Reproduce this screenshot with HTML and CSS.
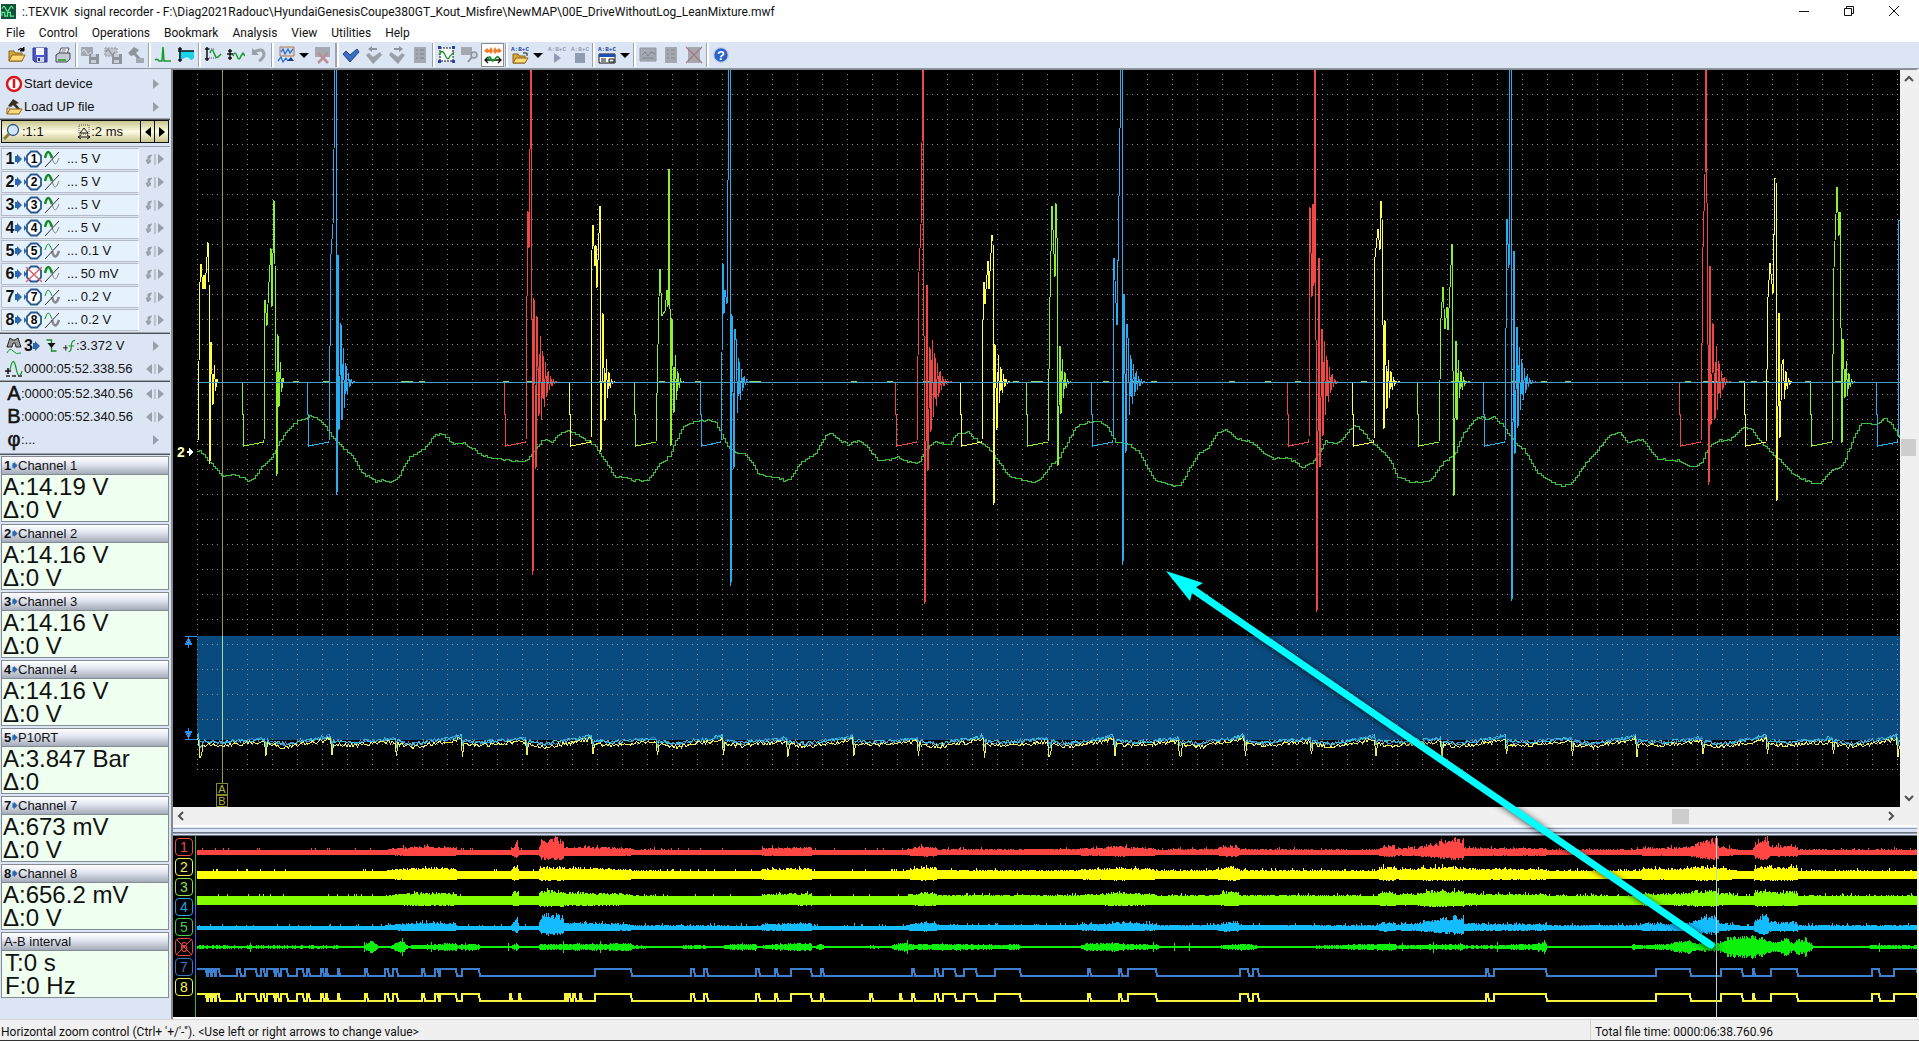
FILE: index.html
```html
<!DOCTYPE html>
<html lang="en">
<head>
    <meta charset="UTF-8">
    <meta name="viewport" content="width=device-width, initial-scale=1.0">
    <title>TEXVIK signal recorder</title>
    <link rel="stylesheet" href="styles.css">
</head>
<body>
    <!-- Icon sprite -->
    <svg class="sprite" aria-hidden="true">
        <symbol id="i-open" viewBox="0 0 18 18">
            <path d="M1 15V5h5l1 2h7v8z" fill="#d9a63c" stroke="#8a6414"/>
            <path d="M1 15l3-6h13l-3 6z" fill="#ffd97a" stroke="#8a6414"/>
            <path d="M10 4q3-3 5-1M16 1v4h-4z" fill="#111" stroke="#111"/>
        </symbol>
        <symbol id="i-save" viewBox="0 0 18 18">
            <path d="M2 2h14v14H4l-2-2z" fill="#4a55c8" stroke="#2a3080"/>
            <path d="M5 2h8v7H5z" fill="#f4f6ff"/>
            <path d="M6 11h7v5H6z" fill="#cfd3ea"/>
            <path d="M7 12h2v3H7z" fill="#2a3080"/>
        </symbol>
        <symbol id="i-print" viewBox="0 0 18 18">
            <path d="M5 8l2-6h8l-2 6z" fill="#fff" stroke="#556"/>
            <path d="M2 9l3-2h11v6l-3 3H2z" fill="#c3c9d4" stroke="#445"/>
            <path d="M4 13h8v2H4z" fill="#3faa3f"/>
            <path d="M8 4h4M7 6h4" stroke="#779"/>
        </symbol>
        <symbol id="i-wavesave" viewBox="0 0 18 18">
            <path d="M0 1h12v9H0z" fill="#a4a9b1"/>
            <path d="M1 6q2-5 4 0t5 0" fill="none" stroke="#dde3ec"/>
            <path d="M8 8h10v10H8z" fill="#8e949d"/>
            <path d="M10 8h5v3h-5zM10 14h5v3h-5z" fill="#c9ced8"/>
        </symbol>
        <symbol id="i-wavesel" viewBox="0 0 18 18">
            <path d="M1 2h12v8H1z" fill="#c0c5ce" stroke="#8e949d" stroke-dasharray="2 1"/>
            <path d="M2 6q2-5 4 0t5 0" fill="none" stroke="#777"/>
            <path d="M8 8h10v10H8z" fill="#8e949d"/>
            <path d="M10 8h5v3h-5zM10 14h5v3h-5z" fill="#c9ced8"/>
        </symbol>
        <symbol id="i-hammer" viewBox="0 0 18 18">
            <path d="M1 7l6-6 5 3-3 3 7 8-2 2-7-8-3 1z" fill="#8e949d"/>
            <path d="M9 12h8v5H9z" fill="#a4a9b1"/>
        </symbol>
        <symbol id="i-peak" viewBox="0 0 18 18">
            <path d="M1 14q2-2 4 1h3L9 1l1 14h7" fill="none" stroke="#149a2c" stroke-width="1.5"/>
        </symbol>
        <symbol id="i-band" viewBox="0 0 18 18">
            <path d="M2 5h15v7q-3 4-5 0-3-2-6 1H2z" fill="#19d3e8"/>
            <path d="M3 1v15M1 3h4M1 14h4M1 5h16" stroke="#111" stroke-width="1.5"/>
        </symbol>
        <symbol id="i-vfit" viewBox="0 0 18 18">
            <path d="M3 1v14M1 3h4M1 13h4" stroke="#111" stroke-width="1.5"/>
            <path d="M5 3h5M5 12h8" stroke="#447" stroke-dasharray="1 1"/>
            <path d="M6 7q2-6 4 0t4 4l3-3" fill="none" stroke="#149a2c" stroke-width="1.5"/>
        </symbol>
        <symbol id="i-vzoom" viewBox="0 0 18 18">
            <path d="M3 3v11M1 5h4M1 12h4M0 8h6" stroke="#111" stroke-width="1.5"/>
            <path d="M6 10q2-6 4 0t4 0l2-3 2 3" fill="none" stroke="#149a2c" stroke-width="1.5"/>
        </symbol>
        <symbol id="i-undo" viewBox="0 0 18 18">
            <path d="M4 6q9-5 10 2 0 4-5 7" fill="none" stroke="#9aa0aa" stroke-width="3"/>
            <path d="M2 2v7h7z" fill="#9aa0aa"/>
        </symbol>
        <symbol id="i-chart" viewBox="0 0 18 18">
            <path d="M3 1h14v9H3z" fill="#cfd9e8" stroke="#b27a4a"/>
            <path d="M4 6l2-3 2 5 3-5 2 4 3-4M1 15l3-4 2 5 3-4 2 3" fill="none" stroke="#2b6fd6" stroke-width="1.3"/>
            <path d="M10 15l4-4 3 4z" fill="#1a3f8f"/>
        </symbol>
        <symbol id="i-chartx" viewBox="0 0 18 18">
            <path d="M1 1h15v10H1z" fill="#a4a9b1"/>
            <path d="M4 7l10 10M14 7L4 17" stroke="#b98f98" stroke-width="2.5"/>
        </symbol>
        <symbol id="i-check" viewBox="0 0 18 18">
            <path d="M1 8l3-3 4 4 7-6 2 3-9 10z" fill="#3a6fc4" stroke="#1f4284"/>
        </symbol>
        <symbol id="i-checkoff" viewBox="0 0 18 18">
            <path d="M1 9l3-2 4 4 7-5 2 3-9 9z" fill="#9aa0aa"/>
            <path d="M3 3l4-3v2h5v2H7v2z" fill="#8e949d"/>
        </symbol>
        <symbol id="i-doc" viewBox="0 0 18 18">
            <path d="M3 1h12v16H3z" fill="#a4a9b1"/>
            <path d="M5 4h2M5 8h2M5 12h2M9 4h4M9 8h4M9 12h4" stroke="#7c828c"/>
        </symbol>
        <symbol id="i-docx" viewBox="0 0 18 18">
            <path d="M3 1h12v16H3z" fill="#a4a9b1"/>
            <path d="M1 1l16 16M17 1L1 17" stroke="#a8757f" stroke-width="1.3"/>
        </symbol>
        <symbol id="i-select" viewBox="0 0 18 18">
            <path d="M2 2h13v13H2z" fill="#fff" stroke="#111" stroke-dasharray="2 1"/>
            <path d="M1 9q3-7 6 0t5 1l4-4" fill="none" stroke="#149a2c" stroke-width="1.3"/>
            <path d="M0 0h3v3H0zM14 0h3v3h-3zM0 14h3v3H0zM14 14h3v3h-3z" fill="#2742a8"/>
        </symbol>
        <symbol id="i-find" viewBox="0 0 18 18">
            <path d="M0 1h11v8H0z" fill="#a4a9b1"/>
            <circle cx="13" cy="9" r="3" fill="#cdd5e2" stroke="#8e949d" stroke-width="1.5"/>
            <path d="M11 11l-4 5" stroke="#8e949d" stroke-width="2"/>
        </symbol>
        <symbol id="i-cursors" viewBox="0 0 18 18">
            <path d="M0 5l3-3 2 2 2-3 2 4 2-4 2 3 2-2 3 3-3 2-2-1-2 2-2-3-2 3-2-2-2 1z" fill="#f08030"/>
            <path d="M1 14h16M4 11l-3 3 3 3M14 11l3 3-3 3" fill="none" stroke="#111" stroke-width="1.3"/>
            <path d="M4 13q2-4 3 0t4 0 3-1" fill="none" stroke="#149a2c" stroke-width="1.8"/>
        </symbol>
        <symbol id="i-abcopen" viewBox="0 0 18 18">
            <text x="0" y="5" class="abc">A:B+C</text>
            <path d="M2 17V8h5l1 2h6v7z" fill="#d9a63c" stroke="#8a6414"/>
            <path d="M2 17l3-5h12l-3 5z" fill="#ffd97a" stroke="#8a6414"/>
            <path d="M12 7h4v3" fill="none" stroke="#111"/>
        </symbol>
        <symbol id="i-abcplay" viewBox="0 0 18 18">
            <text x="0" y="5" class="abc off">A:B+C</text>
            <path d="M6 7l7 5-7 5z" fill="#8f9bb0"/>
        </symbol>
        <symbol id="i-abcstop" viewBox="0 0 18 18">
            <text x="0" y="5" class="abc off">A:B+C</text>
            <path d="M4 7h10v10H4z" fill="#8f9bb0"/>
        </symbol>
        <symbol id="i-abcwin" viewBox="0 0 18 18">
            <text x="0" y="5" class="abc">A:B+C</text>
            <path d="M1 8h16v9H1z" fill="#fff" stroke="#111"/>
            <path d="M1 8h16v3H1z" fill="#1f4fb0"/>
            <path d="M3 13h5M3 15h5M11 13h5v3h-5z" stroke="#111" fill="none"/>
        </symbol>
        <symbol id="i-screen" viewBox="0 0 18 18">
            <path d="M1 2h16v13H1z" fill="#a4a9b1" stroke="#8e949d"/>
            <path d="M3 9l3-3 3 4 3-4 4 2M3 12h12" fill="none" stroke="#7c828c"/>
        </symbol>
        <symbol id="i-help" viewBox="0 0 18 18">
            <circle cx="9" cy="9" r="7.5" fill="#2e62c9" stroke="#c9d6ee" stroke-width="1.5"/>
            <text x="9" y="14" text-anchor="middle" class="help-mark">?</text>
        </symbol>
        <symbol id="i-power" viewBox="0 0 18 18">
            <circle cx="9" cy="9" r="7" fill="#fff" stroke="#d8161c" stroke-width="2.5"/>
            <path d="M9 4v9" stroke="#d8161c" stroke-width="2.5"/>
        </symbol>
        <symbol id="i-load" viewBox="0 0 18 18">
            <path d="M3 8l5-7 6 4-3 1 5 6-2 1-6-6-2 2z" fill="#3a3322"/>
            <path d="M2 16l3-5h12l-3 5z" fill="#ffd97a" stroke="#8a6414"/>
            <path d="M2 16V10h3" fill="none" stroke="#8a6414"/>
        </symbol>
        <symbol id="i-lens" viewBox="0 0 18 18">
            <circle cx="10" cy="7" r="5.5" fill="#cfe6fb" stroke="#33558a" stroke-width="1.3"/>
            <path d="M6 11l-5 5" stroke="#8a7a40" stroke-width="3"/>
        </symbol>
        <symbol id="i-div" viewBox="0 0 14 18">
            <path d="M2 2h10v9H2z" fill="none" stroke="#555" stroke-dasharray="1 1"/>
            <path d="M3 10l4-5 4 5z" fill="none" stroke="#111"/>
            <path d="M1 14h12M4 12l-3 2 3 2M10 12l3 2-3 2" fill="none" stroke="#111"/>
        </symbol>
        <symbol id="i-chip" viewBox="0 0 7 12">
            <path d="M0 3h2V1l5 5-5 5V9H0z" fill="#2f67ab"/>
        </symbol>
        <symbol id="i-oct" viewBox="0 0 18 18">
            <path d="M0 6l3 3-3 3z" fill="#2f67ab"/>
            <path d="M7 1.500h6l4 4v7l-4 4H7l-4-4v-7z" fill="#fff" stroke="#28588f" stroke-width="1.8"/>
        </symbol>
        <symbol id="i-sine" viewBox="0 0 16 18">
            <path d="M1 8q3-12 7 0" fill="none" stroke="#148a24" stroke-width="2.6"/>
            <path d="M8 8q3 12 7 0" fill="none" stroke="#888"/>
            <path d="M1 17L15 2" stroke="#333"/>
        </symbol>
        <symbol id="i-sinelow" viewBox="0 0 16 18">
            <path d="M1 8q3-12 7 0" fill="none" stroke="#149a2c"/>
            <path d="M8 9q3 11 7 0" fill="none" stroke="#888" stroke-width="2.6"/>
            <path d="M1 17L15 2" stroke="#333"/>
        </symbol>
        <symbol id="i-adjust" viewBox="0 0 20 14">
            <path d="M2 10h4M3 10V4l4-1M1 8l2 4 3-4z" fill="#9aa0aa" stroke="#9aa0aa"/>
            <path d="M10 2v11" stroke="#9aa0aa"/>
            <path d="M13 2l6 5-6 5z" fill="#9aa0aa"/>
        </symbol>
        <symbol id="i-next" viewBox="0 0 20 14">
            <path d="M8 2l6 5-6 5z" fill="#9aa0aa"/>
        </symbol>
        <symbol id="i-step" viewBox="0 0 20 14">
            <path d="M7 2L1 7l6 5zM13 2l6 5-6 5z" fill="#9aa0aa"/>
            <path d="M10 2v10" stroke="#9aa0aa"/>
        </symbol>
        <symbol id="i-binoc" viewBox="0 0 16 18">
            <path d="M4 1l-3 9h5l1-4h2l1 4h5l-3-9-3 2H7z" fill="#999" stroke="#222"/>
            <path d="M1 16q3-6 6-2t8 2" fill="none" stroke="#149a2c"/>
        </symbol>
        <symbol id="i-edge" viewBox="0 0 12 16">
            <path d="M1 2h5v11h5" fill="none" stroke="#148a24" stroke-width="1.3"/>
            <path d="M2 5h8l-4 5z" fill="#111"/>
        </symbol>
        <symbol id="i-level" viewBox="0 0 14 16">
            <path d="M0 10h5M3 7v6" stroke="#111"/>
            <path d="M6 14q3 0 3-6t4-6M6 8h6" fill="none" stroke="#149a2c" stroke-width="1.3"/>
        </symbol>
        <symbol id="i-time" viewBox="0 0 18 18">
            <path d="M0 11h6M3 8v6" stroke="#111" stroke-width="1.5"/>
            <path d="M5 10q3-16 6-2t6 3" fill="none" stroke="#149a2c" stroke-width="1.2"/>
            <path d="M1 16h16" stroke="#555" stroke-width="2" stroke-dasharray="4 2"/>
        </symbol>
    </svg>

    <header class="title-bar">
        <svg class="app-icon" viewBox="0 0 16 16">
            <path d="M0 0h16v16H0z" fill="#14503c"/>
            <path d="M1 5q2-5 4 0t4 0 4 0M1 13v-4h3v4h3v-4h3v4h4" fill="none" stroke="#5cf08a" stroke-width="1.3"/>
        </svg>
        <h1>:.TEXVIK&nbsp; signal recorder - F:\Diag2021Radouc\HyundaiGenesisCoupe380GT_Kout_Misfire\NewMAP\00E_DriveWithoutLog_LeanMixture.mwf</h1>
        <div class="window-buttons">
            <button aria-label="Minimize"><svg viewBox="0 0 10 10"><path d="M0 5.5h10"/></svg></button>
            <button aria-label="Restore"><svg viewBox="0 0 10 10"><path d="M.5 2.5h7v7h-7zM2.5 2.5v-2h7v7h-2"/></svg></button>
            <button aria-label="Close"><svg viewBox="0 0 10 10"><path d="M0 0l10 10M10 0L0 10"/></svg></button>
        </div>
    </header>

    <nav class="menu">
        <a href="#">File</a>
        <a href="#">Control</a>
        <a href="#">Operations</a>
        <a href="#">Bookmark</a>
        <a href="#">Analysis</a>
        <a href="#">View</a>
        <a href="#">Utilities</a>
        <a href="#">Help</a>
    </nav>

    <div class="toolbar">
        <button aria-label="Open"><svg><use href="#i-open"/></svg></button>
        <button aria-label="Save"><svg><use href="#i-save"/></svg></button>
        <button aria-label="Print"><svg><use href="#i-print"/></svg></button>
        <span class="sep"></span>
        <button aria-label="Save wave"><svg><use href="#i-wavesave"/></svg></button>
        <button aria-label="Save selection"><svg><use href="#i-wavesel"/></svg></button>
        <button aria-label="Tools"><svg><use href="#i-hammer"/></svg></button>
        <span class="sep"></span>
        <button aria-label="Peak"><svg><use href="#i-peak"/></svg></button>
        <button aria-label="Band"><svg><use href="#i-band"/></svg></button>
        <span class="sep"></span>
        <button aria-label="Fit"><svg><use href="#i-vfit"/></svg></button>
        <button aria-label="Scale"><svg><use href="#i-vzoom"/></svg></button>
        <button aria-label="Undo"><svg><use href="#i-undo"/></svg></button>
        <span class="sep"></span>
        <button aria-label="Chart"><svg><use href="#i-chart"/></svg></button>
        <button class="drop" aria-label="Chart options"></button>
        <button aria-label="Remove chart"><svg><use href="#i-chartx"/></svg></button>
        <span class="sep grip"></span>
        <button aria-label="Bookmark"><svg><use href="#i-check"/></svg></button>
        <button aria-label="Previous bookmark"><svg><use href="#i-checkoff"/></svg></button>
        <button class="flip" aria-label="Next bookmark"><svg><use href="#i-checkoff"/></svg></button>
        <button aria-label="Bookmark list"><svg><use href="#i-doc"/></svg></button>
        <span class="sep"></span>
        <button aria-label="Select"><svg><use href="#i-select"/></svg></button>
        <button aria-label="Find"><svg><use href="#i-find"/></svg></button>
        <button class="pressed" aria-label="Cursors"><svg><use href="#i-cursors"/></svg></button>
        <span class="sep"></span>
        <button aria-label="Open script"><svg><use href="#i-abcopen"/></svg></button>
        <button class="drop" aria-label="Script options"></button>
        <button aria-label="Run script"><svg><use href="#i-abcplay"/></svg></button>
        <button aria-label="Stop script"><svg><use href="#i-abcstop"/></svg></button>
        <span class="sep"></span>
        <button aria-label="Script window"><svg><use href="#i-abcwin"/></svg></button>
        <button class="drop" aria-label="Window options"></button>
        <span class="sep"></span>
        <button aria-label="Screen"><svg><use href="#i-screen"/></svg></button>
        <button aria-label="Report"><svg><use href="#i-doc"/></svg></button>
        <button aria-label="Delete report"><svg><use href="#i-docx"/></svg></button>
        <span class="sep"></span>
        <button aria-label="Help"><svg><use href="#i-help"/></svg></button>
    </div>

    <div class="workspace">
        <aside class="sidebar">
            <div class="group actions">
                <button class="row"><svg class="ic"><use href="#i-power"/></svg>Start device<svg class="side"><use href="#i-next"/></svg></button>
                <button class="row"><svg class="ic"><use href="#i-load"/></svg>Load UP file<svg class="side"><use href="#i-next"/></svg></button>
            </div>

            <div class="zoom-row">
                <button class="zoom-main"><svg class="ic"><use href="#i-lens"/></svg>:1:1<span class="zoom-time"><svg class="ic narrow"><use href="#i-div"/></svg>:2 ms</span></button>
                <button class="arrow" aria-label="Zoom out"><svg viewBox="0 0 8 12"><path d="M7 1v10L1 6z"/></svg></button>
                <button class="arrow" aria-label="Zoom in"><svg viewBox="0 0 8 12"><path d="M1 1v10l6-5z"/></svg></button>
            </div>

            <div class="group channels" id="channels"></div>

            <div class="group">
                <button class="row"><svg class="ic"><use href="#i-binoc"/></svg><b>3</b><svg class="chip"><use href="#i-chip"/></svg><svg class="edge"><use href="#i-edge"/></svg><svg class="edge"><use href="#i-level"/></svg>:3.372 V<svg class="side"><use href="#i-next"/></svg></button>
                <button class="row"><svg class="ic"><use href="#i-time"/></svg>0000:05:52.338.56<svg class="side"><use href="#i-step"/></svg></button>
            </div>

            <div class="group cursors">
                <button class="row"><span class="letter">A</span>:0000:05:52.340.56<svg class="side"><use href="#i-step"/></svg></button>
                <button class="row"><span class="letter">B</span>:0000:05:52.340.56<svg class="side"><use href="#i-step"/></svg></button>
                <button class="row"><span class="letter">φ</span>:...<svg class="side"><use href="#i-next"/></svg></button>
            </div>

            <div class="readouts">
                <section class="readout">
                    <h2><b>1</b><svg><use href="#i-chip"/></svg>Channel 1</h2>
                    <p>A:14.19 V</p>
                    <p>Δ:0 V</p>
                </section>
                <section class="readout">
                    <h2><b>2</b><svg><use href="#i-chip"/></svg>Channel 2</h2>
                    <p>A:14.16 V</p>
                    <p>Δ:0 V</p>
                </section>
                <section class="readout">
                    <h2><b>3</b><svg><use href="#i-chip"/></svg>Channel 3</h2>
                    <p>A:14.16 V</p>
                    <p>Δ:0 V</p>
                </section>
                <section class="readout">
                    <h2><b>4</b><svg><use href="#i-chip"/></svg>Channel 4</h2>
                    <p>A:14.16 V</p>
                    <p>Δ:0 V</p>
                </section>
                <section class="readout">
                    <h2><b>5</b><svg><use href="#i-chip"/></svg>P10RT</h2>
                    <p>A:3.847 Bar</p>
                    <p>Δ:0</p>
                </section>
                <section class="readout">
                    <h2><b>7</b><svg><use href="#i-chip"/></svg>Channel 7</h2>
                    <p>A:673 mV</p>
                    <p>Δ:0 V</p>
                </section>
                <section class="readout">
                    <h2><b>8</b><svg><use href="#i-chip"/></svg>Channel 8</h2>
                    <p>A:656.2 mV</p>
                    <p>Δ:0 V</p>
                </section>
                <section class="readout interval">
                    <h2>A-B interval</h2>
                    <p>T:0 s</p>
                    <p>F:0 Hz</p>
                </section>
            </div>
        </aside>

        <main class="scope">
            <div class="plot-row">
                <svg id="plot" class="plot" viewBox="173 70 1727 737" preserveAspectRatio="none"></svg>
                <div class="vscroll">
                    <svg viewBox="0 0 10 10"><path d="M1 7l4-4 4 4"/></svg>
                    <span class="track"><span class="thumb"></span></span>
                    <svg viewBox="0 0 10 10"><path d="M1 3l4 4 4-4"/></svg>
                </div>
            </div>
            <div class="hscroll">
                <svg viewBox="0 0 10 10"><path d="M7 1L3 5l4 4"/></svg>
                <span class="track"><span class="thumb"></span></span>
                <svg viewBox="0 0 10 10"><path d="M3 1l4 4-4 4"/></svg>
            </div>
            <div class="splitter"></div>
            <div class="overview-row">
                <div class="badges">
                    <span class="c1">1</span>
                    <span class="c2">2</span>
                    <span class="c3">3</span>
                    <span class="c4">4</span>
                    <span class="c5">5</span>
                    <span class="c6">6</span>
                    <span class="c7">7</span>
                    <span class="c8">8</span>
                </div>
                <svg id="overview" class="overview" viewBox="195 836 1722 181" preserveAspectRatio="none"></svg>
            </div>
            <!-- Arrow from the overview to the zoomed part -->
            <svg class="pointer" viewBox="171 69 1748 950" preserveAspectRatio="none">
                <path d="M1188 586L1711 945" stroke="#00ffff" stroke-width="7" stroke-linecap="round"/>
                <path d="M1166 571l37 12-10 6-3 12z" fill="#00ffff"/>
            </svg>
        </main>
    </div>

    <footer class="status">
        <span>Horizontal zoom control (Ctrl+ '+/'-''). &lt;Use left or right arrows to change value&gt;</span>
        <span class="total">Total file time: 0000:06:38.760.96</span>
    </footer>

    <script src="script.js"></script>
</body>
</html>
```
FILE: styles.css
```css
* {
    box-sizing: border-box;
}

body {
    margin: 0;
    height: 100vh;
    display: flex;
    flex-direction: column;
    overflow: hidden;
    background-color: #dce5f3;
    color: #111;
    font-family: "Liberation Sans", Arial, sans-serif;
    font-size: 13px;
}

button {
    border: 0;
    padding: 0;
    background: none;
    color: inherit;
    font: inherit;
}

h1, h2, p {
    margin: 0;
    font-weight: normal;
}

.sprite {
    display: none;
}

/* title bar */
.title-bar {
    display: flex;
    align-items: center;
    height: 23px;
    padding: 0 3px 0 1px;
    background-color: #fff;
    font-family: Roboto, "Open Sans", sans-serif;
}

.title-bar h1 {
    flex: 1;
    padding-left: 6px;
    font-size: 12px;
}

.app-icon {
    width: 15px;
    height: 15px;
}

.window-buttons {
    display: flex;
}

.window-buttons button {
    width: 45px;
    height: 20px;
}

.window-buttons svg {
    width: 10px;
    height: 10px;
    fill: none;
    stroke: #111;
}

/* menu */
.menu {
    display: flex;
    gap: 14px;
    height: 19px;
    padding-left: 6px;
    background-color: #fff;
    font-family: Roboto, "Open Sans", sans-serif;
    font-size: 12px;
    line-height: 20px;
}

.menu a {
    color: #111;
    text-decoration: none;
}

/* toolbar */
.toolbar {
    display: flex;
    align-items: center;
    height: 27px;
    padding-left: 5px;
    background-color: #dce5f3;
    border-bottom: 1px solid #8f959e;
}

.toolbar button {
    display: flex;
    align-items: center;
    justify-content: center;
    width: 23px;
    height: 24px;
}

.toolbar svg {
    width: 18px;
    height: 18px;
    flex: none;
}

.toolbar .flip svg {
    transform: scaleX(-1);
}

.toolbar .pressed {
    background-color: #fff;
    border: 1px solid #8b8b8b;
}

.toolbar .drop {
    width: 14px;
}

.toolbar .drop::after {
    content: "";
    border: 5px solid transparent;
    border-top-color: #000;
    border-bottom: 0;
}

.sep {
    width: 4px;
    height: 24px;
    border-left: 1px solid #dce5f3;
    background-color: #9da3ad;
    border-right: 2px solid #fff;
}

.sep.grip {
    width: 5px;
}

.abc {
    font: bold 6px "Liberation Mono", monospace;
    fill: #1b3fa0;
}

.abc.off {
    fill: #8f9bb0;
}

.help-mark {
    font: bold 13px "Liberation Sans", sans-serif;
    fill: #fff;
}

/* left panel */
.workspace {
    display: flex;
    flex: 1;
    min-height: 0;
}

.sidebar {
    width: 171px;
    flex: none;
    padding-right: 1px;
    background-color: #dce5f3;
}

.group {
    border-bottom: 2px ridge #9aa2ad;
}

.actions {
    padding-top: 3px;
}

.channels {
    padding-bottom: 1px;
}

.row {
    display: flex;
    align-items: center;
    width: 100%;
    height: 23px;
    padding-left: 5px;
    white-space: pre;
}

.row b {
    width: 9px;
    font-size: 16px;
}

.ic {
    width: 18px;
    height: 18px;
    margin-right: 1px;
}

.ic.narrow {
    width: 14px;
    margin: 0;
}

.chip {
    width: 7px;
    height: 12px;
}

.edge {
    width: 13px;
    height: 16px;
    margin-left: 5px;
}

.side {
    width: 20px;
    height: 14px;
    margin-left: auto;
    margin-right: 5px;
}

.letter {
    width: 14px;
    margin-left: 2px;
    font-size: 20px;
    -webkit-text-stroke: 0.5px #111;
}

.cursors {
    padding-bottom: 2px;
}

.zoom-row {
    display: flex;
    height: 27px;
    padding: 0 1px 3px;
    border-bottom: 1px solid #9aa2ad;
}

.zoom-row button {
    display: flex;
    align-items: center;
    border: 1px solid #111;
    background: linear-gradient(#c9c690, #fdfbe2 50%, #c9c690);
}

.zoom-row .zoom-main {
    flex: 1;
    padding: 0 17px 0 1px;
}

.zoom-time {
    display: flex;
    align-items: center;
    margin-left: auto;
}

.zoom-row .arrow {
    width: 15px;
    margin-left: -1px;
    justify-content: center;
}

.arrow svg {
    width: 8px;
    height: 12px;
}

.channel {
    display: flex;
    align-items: center;
    height: 23px;
    padding-left: 1px;
}

.channel button {
    display: flex;
    align-items: center;
    width: 138px;
    height: 22px;
    padding-left: 3px;
    background-color: #e5f1fd;
    border: 1px solid #b5bcc6;
    border-right-color: #fff;
}

.channel b {
    width: 10px;
    font-size: 16px;
}

.channel .socket {
    width: 18px;
    height: 18px;
    margin: 0 2px;
}

.socket text {
    font: bold 12px "Liberation Sans", sans-serif;
}

.channel .sine {
    width: 16px;
    height: 18px;
}

.channel .dots {
    margin: 0 3px 0 7px;
}

/* value boxes */
.readouts {
    display: flex;
    flex-direction: column;
    gap: 2px;
    padding: 1px 1px 0;
}

.readout {
    height: 66px;
    border: 1px solid #858b95;
    background-color: #effff0;
}

.readout h2 {
    display: flex;
    align-items: center;
    height: 18px;
    padding-left: 2px;
    border-bottom: 1px solid #858b95;
    background: linear-gradient(#fff, #e4e8f2 40%, #a4abb8);
    font-size: 13px;
}

.readout h2 svg {
    width: 6px;
    height: 9px;
}

.readout h2 b {
    width: 8px;
}

.readout p {
    padding-left: 1px;
    font-size: 24px;
    line-height: 23px;
    white-space: nowrap;
}

.interval p {
    padding-left: 3px;
}

/* scope */
.scope {
    position: relative;
    display: flex;
    flex-direction: column;
    flex: 1;
    min-width: 0;
    padding-right: 2px;
    border-left: 2px solid #858a90;
    background-color: #f0f0f0;
}

.plot-row {
    display: flex;
    flex: 1;
    min-height: 0;
    border-top: 1px solid #858a90;
}

.plot {
    flex: 1;
    min-width: 0;
    height: 100%;
    background-color: #000;
    shape-rendering: crispEdges;
}

.vscroll {
    display: flex;
    flex-direction: column;
    align-items: center;
    width: 17px;
    padding: 4px 0;
    background-color: #f0f0f0;
}

.hscroll {
    display: flex;
    align-items: center;
    height: 18px;
    padding: 0 21px 0 3px;
    background-color: #f0f0f0;
}

.vscroll > svg,
.hscroll > svg {
    width: 10px;
    height: 10px;
    fill: none;
    stroke: #505050;
    stroke-width: 2;
}

.track {
    display: flex;
    flex: 1;
}

.vscroll .track {
    flex-direction: column;
}

.vscroll .track::before {
    content: "";
    flex: 0 0 50%;
}

.thumb {
    width: 15px;
    height: 17px;
    background-color: #cdcdcd;
}

.hscroll .thumb {
    width: 17px;
    height: 15px;
    margin-left: 87.4%;
}

.splitter {
    height: 11px;
    border-top: 2px solid #fff;
    border-bottom: 4px double #70757c;
    background: linear-gradient(#dce5f3 1px, #8f9db8 1px, #8f9db8 2px, #dce5f3 2px);
}

.overview-row {
    display: flex;
    height: 183px;
    border-bottom: 2px solid #fff;
}

.badges {
    display: flex;
    flex-direction: column;
    gap: 2px;
    width: 22px;
    padding: 2px;
    background-color: #000;
}

.badges span {
    height: 18px;
    border: 1px solid;
    border-radius: 4px;
    font-size: 14px;
    line-height: 16px;
    text-align: center;
}

.c1 { color: #f04a46; }
.c2 { color: #f4f454; }
.c3 { color: #8ae048; }
.c4 { color: #2a9fe0; }
.c5 { color: #48d048; }
.c6 {
    color: #e04844;
    background: linear-gradient(to top right, transparent 48%, #e04844 48%, #e04844 53%, transparent 53%),
        linear-gradient(to bottom right, transparent 48%, #e04844 48%, #e04844 53%, transparent 53%);
}
.c7 { color: #3a78c8; }
.c8 { color: #f4f454; }

.overview {
    flex: 1;
    min-width: 0;
    height: 181px;
    background-color: #000;
    shape-rendering: crispEdges;
}

.pointer {
    position: absolute;
    top: 0;
    left: -2px;
    width: calc(100% + 2px);
    height: 100%;
    pointer-events: none;
    fill: none;
    filter: drop-shadow(3px 3px 3px rgba(0, 0, 0, 0.7));
}

/* plot text */
.mark {
    font: 11px "Liberation Sans", sans-serif;
    fill: #b0b03c;
}

.zero {
    font: bold 14px "Liberation Sans", sans-serif;
    fill: #ffffb0;
}

/* status bar */
.status {
    display: flex;
    justify-content: space-between;
    height: 22px;
    padding-left: 1px;
    border-top: 1px solid #d5d5d5;
    border-bottom: 1px solid #333;
    background-color: #f0f0f0;
    font-family: Roboto, "Open Sans", sans-serif;
    font-size: 12px;
    line-height: 24px;
}

.total {
    width: 329px;
    padding-left: 4px;
    border-left: 1px solid #d0d0d0;
}
```
FILE: script.js
```js
const NS = 'http://www.w3.org/2000/svg';
const plot = document.getElementById('plot');
const overview = document.getElementById('overview');

const RED = '#ee4744';
const YELLOW = '#ffff48';
const GREEN = '#8af032';
const BLUE = '#28aef0';

// repeatable noise
let seed = 7;
function rnd() {
    seed = (seed * 16807) % 2147483647;
    return seed / 2147483647;
}

function add(parent, name, attrs, text) {
    const el = document.createElementNS(NS, name);
    for (const key in attrs) el.setAttribute(key, attrs[key]);
    if (text) el.textContent = text;
    parent.appendChild(el);
    return el;
}

function line(parent, d, color, width) {
    add(parent, 'path', { d: d, fill: 'none', stroke: color, 'stroke-width': width || 1 });
}

// linear interpolation in a flat list x, value, x, value...
function at(list, x) {
    for (let i = 2; i < list.length; i += 2) {
        if (x <= list[i]) {
            const t = (x - list[i - 2]) / (list[i] - list[i - 2]);
            return list[i - 1] + (list[i + 1] - list[i - 1]) * Math.max(0, t);
        }
    }
    return list[list.length - 1];
}

// ---- channel rows ----
const channels = [
    ['5 V', 'sine'], ['5 V', 'sine'], ['5 V', 'sine'], ['5 V', 'sine'],
    ['0.1 V', 'sinelow'], ['50 mV', 'sine'], ['0.2 V', 'sinelow'], ['0.2 V', 'sinelow']
];
document.getElementById('channels').innerHTML = channels.map(function (c, i) {
    const n = i + 1;
    const inner = n === 6
        ? '<path d="M2 2l16 15M18 2L2 17" stroke="#e0606a" stroke-width="1.5"/>'
        : '<text x="10" y="13" text-anchor="middle">' + n + '</text>';
    return '<div class="channel"><button><b>' + n + '</b><svg class="chip"><use href="#i-chip"/></svg>' +
        '<svg class="socket" viewBox="0 0 18 18"><use href="#i-oct"/>' + inner + '</svg>' +
        '<svg class="sine"><use href="#i-' + c[1] + '"/></svg>' +
        '<span class="dots">...</span>' + c[0] + '</button>' +
        '<svg class="side"><use href="#i-adjust"/></svg></div>';
}).join('');

// ---- main plot ----
add(plot, 'rect', { x: 197, y: 636, width: 1703, height: 104, fill: '#0a4b7f' });

let grid = '';
for (let x = 197; x <= 1897; x += 25) grid += 'M' + (x + 0.5) + ' 69V770';
for (let y = 94; y <= 769; y += 25) grid += 'M197 ' + (y + 0.5) + 'H1900';
add(plot, 'path', { d: grid, fill: 'none', stroke: '#8c9090', 'stroke-dasharray': '1 4' });

line(plot, 'M222.5 70V783', '#98985a');
line(plot, 'M222.5 636V740', '#a4dca0');

// manifold pressure
const wave = [197,451,202,452,205,458,213,465,222,476,231,474,240,476,246,480,252,479,261,466,270,459,279,441,287,430,
    294,423,301,419,309,416,316,418,324,425,333,438,342,447,351,455,362,473,374,481,381,480,388,482,398,476,409,457,
    424,448,433,436,440,432,446,437,453,444,464,443,481,455,494,457,507,460,522,461,527,460,533,450,542,439,551,441,
    560,433,568,430,579,436,594,445,605,461,614,476,629,479,642,481,648,479,657,466,670,454,675,441,684,425,695,421,
    705,421,708,419,714,421,719,429,727,446,734,452,744,453,752,463,758,474,770,476,784,480,790,478,799,463,814,454,
    823,438,829,432,836,438,847,444,859,440,868,448,877,459,888,460,897,457,908,462,918,462,925,449,934,440,947,445,
    958,432,967,432,977,441,990,450,999,463,1008,475,1019,479,1034,483,1040,479,1051,464,1058,458,1066,443,1075,427,
    1088,421,1099,421,1106,425,1115,441,1128,444,1139,452,1145,466,1154,479,1171,485,1180,485,1186,473,1197,454,
    1208,447,1217,432,1225,429,1234,438,1250,442,1262,452,1273,458,1287,457,1302,467,1313,461,1318,452,1325,441,
    1337,443,1353,425,1360,429,1372,443,1388,457,1397,477,1411,482,1430,480,1442,463,1454,454,1461,436,1471,422,
    1481,416,1485,419,1492,416,1502,425,1512,439,1524,450,1535,470,1547,480,1562,486,1572,482,1586,461,1597,449,
    1609,436,1619,432,1626,442,1642,439,1656,458,1677,460,1692,467,1700,464,1708,447,1716,440,1729,440,1743,427,
    1749,427,1760,442,1782,463,1793,475,1813,483,1821,482,1830,471,1842,465,1854,434,1861,423,1875,424,1885,418,
    1892,425,1900,440];
let d = 'M197 451';
for (let x = 199; x <= 1900; x += 2) d += 'H' + x + 'V' + Math.round(at(wave, x) + rnd() * 2 - 1);
line(plot, d, '#3cc03c');

// ignition events: colour, dwell start, dwell end, spike points, ring amplitude, ring end
const events = [
    [YELLOW, 0, 198, '200,282 201,264 203,289 204,275 205,289 208,242 209,282 210,464 211,342 213,405', 22, 220],
    [GREEN, 242, 264, '265,300 267,326 269,282 271,248 272,307 274,200 275,264 277,476 278,334 279,407', 26, 286],
    [BLUE, 307, 329, '331,254 333,225 334,150 335,60 336,60 337,495 338,255 339,430 341,323 342,420', 34, 356],
    [RED, 504, 526, '527,297 528,211 529,248 530,150 531,60 533,575 534,298 536,469 537,316 539,416', 42, 559],
    [YELLOW, 569, 591, '592,250 593,225 595,266 596,245 597,288 600,206 601,452 603,313 605,421', 24, 616],
    [GREEN, 634, 656, '659,297 660,269 662,316 665,311 667,290 668,307 669,169 671,446 672,318 674,413', 30, 684],
    [BLUE, 700, 721, '723,263 724,314 725,290 727,304 729,60 730,60 731,586 732,314 734,469 735,329', 38, 751],
    [RED, 895, 917, '919,272 921,225 922,143 923,60 925,604 927,285 928,471 930,347 931,432', 38, 952],
    [YELLOW, 960, 982, '983,320 984,282 985,304 988,261 989,289 992,235 993,241 994,505 995,344 997,430', 26, 1012],
    [GREEN, 1026, 1048, '1050,297 1052,206 1055,277 1056,203 1057,238 1058,466 1060,346 1061,414', 24, 1072],
    [BLUE, 1091, 1113, '1114,258 1117,325 1119,197 1121,60 1122,60 1123,565 1124,294 1126,453 1127,324', 36, 1148],
    [RED, 1287, 1309, '1310,207 1312,297 1313,204 1314,286 1315,60 1317,612 1319,258 1320,467 1322,329 1323,436', 38, 1341],
    [YELLOW, 1352, 1374, '1375,257 1378,229 1380,250 1381,201 1382,218 1384,429 1385,320 1387,409', 22, 1400],
    [GREEN, 1417, 1439, '1441,318 1443,287 1445,329 1447,307 1448,330 1452,244 1454,496 1456,341 1457,420', 22, 1470],
    [BLUE, 1483, 1505, '1507,219 1509,268 1510,60 1511,60 1512,601 1514,251 1515,454 1517,327 1518,428', 32, 1537],
    [RED, 1679, 1701, '1703,247 1705,175 1706,60 1709,485 1710,266 1711,425 1713,323 1715,420', 34, 1731],
    [YELLOW, 1744, 1766, '1768,297 1770,263 1773,294 1775,178 1776,178 1777,501 1779,313 1780,438 1782,364', 24, 1794],
    [GREEN, 1810, 1832, '1834,268 1837,187 1839,236 1840,212 1842,443 1843,339 1845,398', 22, 1856],
    [BLUE, 1876, 1898, '1899,220 1900,220', 0, 1900]
];
const BASE = 382;

let base = 'M197 382.5';
for (let x = 200; x < 1900; x += 6) base += 'L' + x + ' ' + (BASE + 0.5 + (rnd() > 0.85 ? -1 : 0));
line(plot, base, '#86d860');

events.forEach(function (e) {
    let p = e[1] ? 'M' + e[1] + ' ' + BASE + 'L' + (e[1] + 2) + ' 446L' + e[2] + ' 442' : 'M' + e[2] + ' 442';
    e[3].split(' ').forEach(function (pt) { p += 'L' + pt.replace(',', ' '); });
    let x = +e[3].split(' ').pop().split(',')[0];
    const from = x;
    let sign = -1;
    while (x < e[5]) {
        x += 1.3;
        const fade = Math.pow(1 - Math.min(1, (x - from) / (e[5] - from)), 2.6);
        p += 'L' + x.toFixed(1) + ' ' + (BASE + sign * e[4] * 1.3 * fade).toFixed(1);
        sign = -sign;
    }
    line(plot, p, e[0]);
});
line(plot, 'M197 382.5H1900', '#489cc8');

// sensor traces at the lower edge of the band
function sensor(color, shift, spike) {
    let s = '';
    for (let x = 197; x < 1900; x += 1.5) {
        const turn = (x - 200 + 65.3) / 65.3;
        const ph = turn % 1;
        let y = at([0, 742, 0.1, 744, 0.3, 746, 0.55, 743, 0.8, 741, 0.97, 738, 1, 738], ph);
        if (Math.floor(turn) % 2) y = (y + 743) / 2;
        if (ph < 0.025) y += spike;
        y += shift + (rnd() * 4 - 2);
        s += (s ? 'L' : 'M') + x + ' ' + y.toFixed(1);
    }
    line(plot, s, color);
}
sensor('#3a88d0', -2, 2);
sensor('#38c0d8', -2, 6);
sensor('#eef05c', 1, 12);

// band handles
line(plot, 'M185 636.5H197M185 739.5H197M188.5 640V648M188.5 728V736', '#2a90f0');
add(plot, 'path', { d: 'M188.5 637l4 8h-8zM188.5 739l4-8h-8z', fill: '#2a90f0' });

// zero marker and A/B cursor labels
add(plot, 'text', { x: 177, y: 457, class: 'zero' }, '2');
add(plot, 'path', { d: 'M187 451h2v-3l5 4-5 4v-3h-2z', fill: '#fff' });
add(plot, 'rect', { x: 216.5, y: 783.5, width: 11, height: 11, fill: 'none', stroke: '#88882c' });
add(plot, 'rect', { x: 216.5, y: 795.5, width: 11, height: 11, fill: 'none', stroke: '#88882c' });
add(plot, 'text', { x: 222, y: 793, 'text-anchor': 'middle', class: 'mark' }, 'A');
add(plot, 'text', { x: 222, y: 805, 'text-anchor': 'middle', class: 'mark' }, 'B');

// ---- overview ----
const load = [195,1,380,1,410,4,455,4,457,1,510,1,513,4,517,10,519,1,538,1,541,10,548,14,562,11,564,4,590,4,630,3,632,1.5,
    760,1,762,3,811,4,812,1,905,1,910,3,925,5,936,4,937,2,1080,2,1082,3,1100,3,1118,5,1130,4,1154,3,1156,1.5,1215,2,
    1225,5,1237,5,1240,2,1370,1.5,1377,1.5,1382,5,1394,5,1396,2,1405,4,1415,3,1425,6,1440,9,1455,12,1463,11,1464,4,
    1484,3,1545,3,1547,1.5,1640,1.5,1643,4,1660,3,1690,4,1700,9,1717,12,1719,4,1730,3,1740,1,1753,1,1755,8,1764,13,
    1768,12,1769,5,1797,5,1798,1.5,1917,1.5];
const knock = [195,1.5,340,1.5,345,0.5,361,0.5,371,6,378,1,390,1,401,6,408,1.5,440,3,455,4,458,1,460,3,478,3,480,1,510,1,
    516,3,520,0.5,538,0.5,540,3,600,3,630,4,632,2,650,1,660,0.5,680,0.5,683,2,705,1.5,710,0.5,722,0.5,724,2,740,3,
    755,3,757,1,780,3,800,4,810,4,813,0.5,820,3,826,0.5,865,0.5,867,1.5,890,1,900,4,905,4,910,3,940,3,955,3,1000,2,
    1018,3,1020,0.5,1080,0.5,1082,3,1112,4,1130,3,1155,2.5,1160,1,1210,0.7,1225,2,1240,3,1255,2,1258,0.5,1302,0.5,
    1305,1,1340,2,1375,3,1395,3,1397,1.5,1455,3,1463,3,1465,1.5,1500,2,1535,3,1545,6,1547,1.5,1575,0.7,1630,0.5,
    1632,3,1640,1.5,1670,3,1680,6,1690,6,1692,4,1715,4,1722,5,1728,9,1755,10,1763,8,1770,5,1776,4,1785,8,1788,7,
    1793,4,1797,7,1805,6,1811,4,1813,1,1840,0.5,1868,0.5,1870,2,1917,1.5];

function band(color, top, bottom, gain, cap) {
    let s = '';
    for (let x = 197; x < 1917; x++) {
        const g = Math.min(cap, at(load, x) * gain);
        const spike = rnd() > 0.94 ? 2 : 0;
        const up = g * (0.6 + rnd() * 0.6) + spike;
        const down = Math.max(0, g - 1.5) * (0.25 + rnd() * 0.3);
        s += 'M' + (x + 0.5) + ' ' + (top - up + 1).toFixed(1) + 'V' + (bottom + down).toFixed(1);
    }
    line(overview, s, color);
}
band('#ff4643', 850, 855, 1, 20);
band('#ffff00', 871, 879, 1, 5);
band('#84ff00', 896, 904.5, 1, 6);
band('#12bcff', 925.5, 930, 0.9, 20);

let k = '';
for (let x = 197; x < 1917; x++) {
    const a = at(knock, x);
    const h = a < 0.8 ? 0.6 : a * (0.7 + rnd() * 0.5) + (rnd() > 0.985 ? 3 : 0);
    k += 'M' + (x + 0.5) + ' ' + (947 - h).toFixed(1) + 'V' + (947 + h).toFixed(1);
}
line(overview, k, '#0cf00c');

const pulses = [[197,206],[208,210],[212,214],[216,219],[237,240],[245,256],[261,264],[267,274],[276,278],[281,287],
    [297,303],[307,309],[321,323],[326,327],[338,339],[365,367],[385,388],[393,397],[422,424],[435,438],[440,456],
    [462,479],[595,631],[691,694],[704,707],[756,759],[775,777],[791,811],[821,823],[912,914],[935,938],[943,955],
    [964,976],[995,1020],[1088,1090],[1119,1121],[1128,1156],[1240,1248],[1253,1258],[1486,1488],[1494,1546],
    [1656,1690],[1721,1742],[1753,1754],[1771,1797],[1872,1879],[1894,1917]];

function digital(color, low, high, extra) {
    let s = 'M197 ' + high;
    pulses.concat(extra).sort(function (a, b) { return a[0] - b[0]; }).forEach(function (p) {
        s += 'H' + p[0] + 'V' + high + 'H' + p[1] + 'L' + (p[1] + 1) + ' ' + low;
    });
    line(overview, s, color, 2);
}
digital('#3c80d0', 976, 969, []);
digital('#f4f440', 1001, 994, [[510,511],[519,520],[565,566],[568,570],[573,575],[580,581],[870,872],[900,901]]);

line(overview, 'M195.5 836V1017', '#3cb43c');
line(overview, 'M195.5 905V975', '#3a60e0');
line(overview, 'M1716.5 836V1017', '#a8dcdc');
```
